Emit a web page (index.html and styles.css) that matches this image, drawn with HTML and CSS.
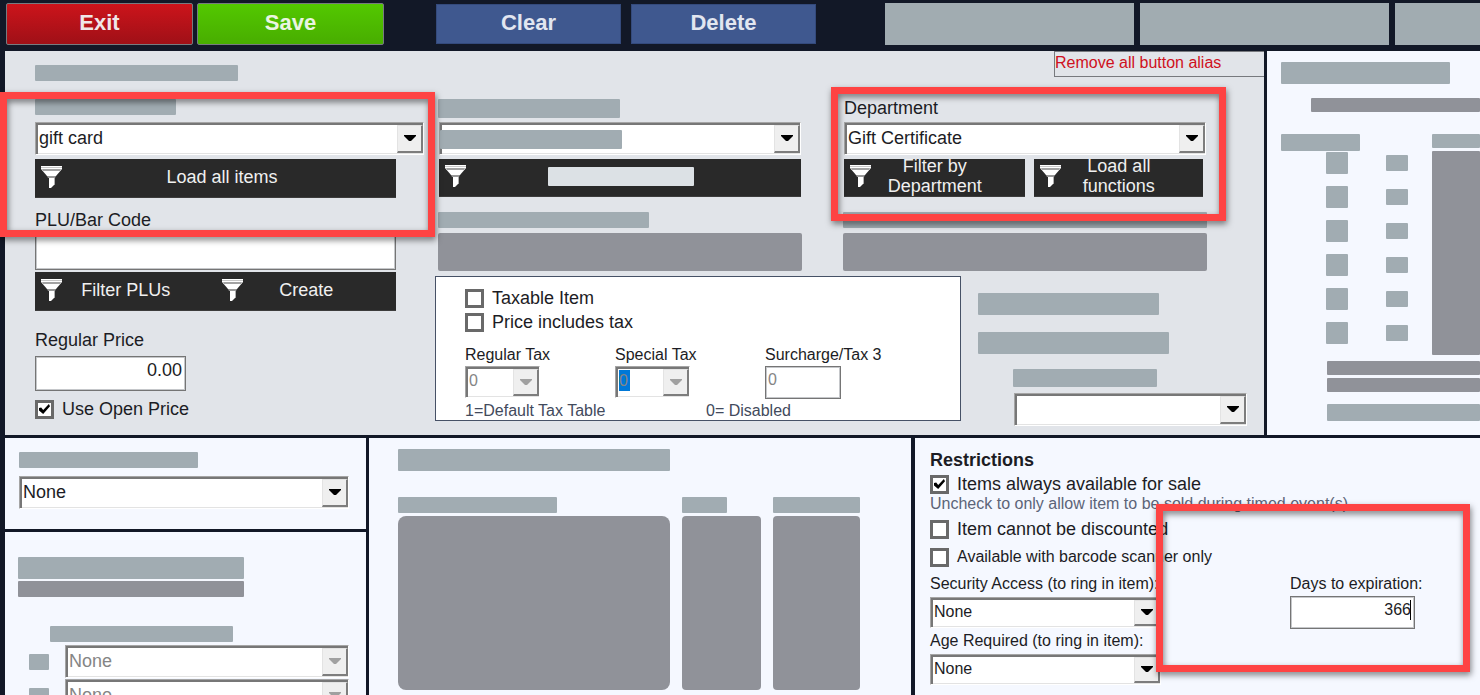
FILE: index.html
```html
<!DOCTYPE html>
<html lang="en">
<head>
<meta charset="utf-8">
<title>Item Setup</title>
<link rel="stylesheet" href="styles.css">
</head>
<body>
<svg class="defs" aria-hidden="true">
  <symbol id="funnel" viewBox="0 0 21 22">
    <path d="M0 0h21v3l-6 7H6L0 3z" fill="#fff"/>
    <path d="M0 1h21v1H0z" fill="#c8c8c8"/>
    <path d="M1 3h19l-1 2H2z" fill="#a3a3a3"/>
    <path d="M6 10h9l-1 2H7z" fill="#989898"/>
    <path d="M7 12h7v6l-4 4H8V12z" fill="#fff"/>
    <path d="M13 12h1v6l-1 1z" fill="#b0b0b0"/>
  </symbol>
  <symbol id="caret" viewBox="0 0 12 7"><path d="M0 0h12v1L7 6H5L0 1z"/></symbol>
</svg>

<header class="toolbar">
  <button class="tool exit">Exit</button>
  <button class="tool save">Save</button>
  <button class="tool blue first">Clear</button>
  <button class="tool blue">Delete</button>
  <div class="slots"><span class="slot"></span><span class="slot"></span><span class="slot last"></span></div>
</header>

<main class="workspace">
  <div class="row top">
    <section class="panel item">
      <div class="identity">
        <span class="bar w203"></span>
        <span class="bar w141"></span>
        <div class="combo"><select aria-label="Item name"><option>gift card</option></select><span class="arrow"><svg><use href="#caret"/></svg></span></div>
        <button class="dark load"><svg><use href="#funnel"/></svg><span>Load all items</span></button>
        <label class="label plu" for="plu">PLU/Bar Code</label>
        <input class="box wide" id="plu" type="text">
        <div class="pair"><button class="dark"><svg><use href="#funnel"/></svg><span>Filter PLUs</span></button><button class="dark"><svg><use href="#funnel"/></svg><span>Create</span></button></div>
        <label class="label price" for="price">Regular Price</label>
        <input class="box amount" id="price" type="text" value="0.00">
        <label class="check open"><input type="checkbox" checked>Use Open Price</label>
        <div class="mark mark-item"></div>
      </div>

      <div class="details">
        <button class="alias">Remove all button alias</button>
        <div class="lookups">
          <div class="lookup">
            <span class="bar h19 w182"></span>
            <div class="combo"><select aria-label="Lookup"><option></option></select><span class="bar h19 w182 cover"></span><span class="arrow"><svg><use href="#caret"/></svg></span></div>
            <button class="dark" aria-label="Filter"><svg><use href="#funnel"/></svg><span><i class="blank"></i></span></button>
            <span class="bar w211 sub"></span>
            <span class="bar deep field"></span>
          </div>
          <div class="lookup">
            <label class="label dept" for="dept">Department</label>
            <div class="combo"><select id="dept"><option>Gift Certificate</option></select><span class="arrow"><svg><use href="#caret"/></svg></span></div>
            <div class="pair split"><button class="dark"><svg><use href="#funnel"/></svg><span>Filter by Department</span></button><button class="dark"><svg><use href="#funnel"/></svg><span>Load all functions</span></button></div>
            <span class="bar sub"></span>
            <span class="bar deep field"></span>
            <div class="mark mark-dept"></div>
          </div>
        </div>
        <div class="lower">
          <div class="tax">
            <label class="check"><input type="checkbox">Taxable Item</label>
            <label class="check"><input type="checkbox">Price includes tax</label>
            <div class="rates">
              <div class="rate"><label for="t1">Regular Tax</label><div class="combo off"><select id="t1" disabled><option>0</option></select><span class="arrow"><svg><use href="#caret"/></svg></span></div></div>
              <div class="rate"><label for="t2">Special Tax</label><div class="combo off picked"><select id="t2" disabled><option>0</option></select><span class="arrow"><svg><use href="#caret"/></svg></span></div></div>
              <div class="rate"><label for="t3">Surcharge/Tax 3</label><input class="box" id="t3" type="text" value="0" disabled></div>
            </div>
            <div class="legend"><span>1=Default Tax Table</span><span>0= Disabled</span></div>
          </div>
          <div class="side">
            <span class="bar h22 w181"></span>
            <span class="bar h22 w191"></span>
            <div class="nested"><span class="bar h18 w144"></span>
            <div class="combo"><select aria-label="Option"><option></option></select><span class="arrow"><svg><use href="#caret"/></svg></span></div></div>
          </div>
        </div>
      </div>
    </section>

    <section class="panel extras">
      <span class="bar h22 w169"></span>
      <span class="bar deep h14 note"></span>
      <div class="matrix">
        <div class="choices">
          <span class="bar h17 w79"></span>
          <div class="choice"><i></i><b></b></div><div class="choice"><i></i><b></b></div><div class="choice"><i></i><b></b></div>
          <div class="choice"><i></i><b></b></div><div class="choice"><i></i><b></b></div><div class="choice"><i></i><b></b></div>
        </div>
        <div class="list"><span class="bar h14"></span><span class="bar deep fill"></span></div>
      </div>
      <div class="notes"><span class="bar deep h14"></span><span class="bar deep h14"></span><span class="bar h17"></span></div>
    </section>
  </div>

  <div class="row bottom">
    <div class="stack">
      <section class="panel group">
        <span class="bar w179"></span>
        <div class="combo"><select aria-label="Group"><option>None</option></select><span class="arrow"><svg><use href="#caret"/></svg></span></div>
      </section>
      <section class="panel modifiers">
        <span class="bar h22 w226"></span>
        <span class="bar deep w226"></span>
        <span class="bar w183 caption"></span>
        <div class="mod"><span class="bar w20"></span><div class="combo off"><select aria-label="Modifier 1" disabled><option>None</option></select><span class="arrow"><svg><use href="#caret"/></svg></span></div></div>
        <div class="mod"><span class="bar w20"></span><div class="combo off"><select aria-label="Modifier 2" disabled><option>None</option></select><span class="arrow"><svg><use href="#caret"/></svg></span></div></div>
      </section>
    </div>

    <section class="panel stock">
      <span class="bar h22 w272"></span>
      <div class="columns">
        <div><span class="bar w159"></span><span class="bar deep tall big"></span></div>
        <div><span class="bar w45"></span><span class="bar deep tall"></span></div>
        <div><span class="bar"></span><span class="bar deep tall"></span></div>
      </div>
    </section>

    <section class="panel limits">
      <h2>Restrictions</h2>
      <label class="check"><input type="checkbox" checked>Items always available for sale</label>
      <p>Uncheck to only allow item to be sold during timed event(s)</p>
      <label class="check discount"><input type="checkbox">Item cannot be discounted</label>
      <label class="check small"><input type="checkbox">Available with barcode scanner only</label>
      <div class="access">
        <div class="levels">
          <label for="sec">Security Access (to ring in item):</label>
          <div class="combo"><select id="sec"><option>None</option></select><span class="arrow"><svg><use href="#caret"/></svg></span></div>
          <label for="age">Age Required (to ring in item):</label>
          <div class="combo"><select id="age"><option>None</option></select><span class="arrow"><svg><use href="#caret"/></svg></span></div>
        </div>
        <div class="expiry">
          <label for="days">Days to expiration:</label>
          <input class="box" id="days" type="text" value="366">
        </div>
      </div>
      <div class="mark mark-days"></div>
    </section>
  </div>
</main>
</body>
</html>
```

FILE: styles.css
```css
* { box-sizing: border-box; }
body {
  margin: 0;
  height: 100vh;
  display: flex;
  flex-direction: column;
  overflow: hidden;
  background: #121827;
  color: #1c1c24;
  font: 18px/20px "Liberation Sans", Arial, sans-serif;
}
button, input, select { font: inherit; color: inherit; margin: 0; }
.defs { position: absolute; width: 0; height: 0; }

/* toolbar */
.toolbar { flex: none; height: 51px; padding: 3px 0 6px 6px; display: flex; align-items: center; overflow: hidden; }
.tool {
  flex: none; width: 187px; height: 42px; margin-right: 4px; padding: 0 0 3px;
  border: 1px solid #777b80; border-radius: 2px; color: #f0e6e8; font-weight: bold; font-size: 22px;
}
.exit { background: linear-gradient(#cc141b, #9f1017); }
.save { background: linear-gradient(#53c800, #48ad00); color: #eaf5e2; }
.blue { width: 185px; height: 40px; margin-right: 10px; background: #3f588f; border: 1px solid #344a7c; border-radius: 0; color: #e2e6f0; }
.first { margin-left: 48px; }
.slots { display: flex; gap: 6px; margin-left: 59px; flex: none; }
.slot { width: 249px; height: 42px; background: #a1acb1; }

/* panels */
.workspace { flex: 1; min-height: 0; display: flex; flex-direction: column; gap: 3px; padding-left: 5px; }
.row { display: flex; gap: 3px; }
.bottom { flex: 1; min-height: 0; }
.panel { background: #f5f8ff; }
.item { flex: 1; display: flex; background: #e1e4e9; }

/* placeholder bars */
.bar { display: block; height: 16px; border-radius: 1px; background: #a1acb2; }
.deep { background: #909299; }
.h14 { height: 14px; } .h17 { height: 17px; } .h18 { height: 18px; } .h19 { height: 19px; } .h22 { height: 22px; }
.w20 { width: 20px; } .w45 { width: 45px; } .w79 { width: 79px; } .w141 { width: 141px; } .w144 { width: 144px; }
.w159 { width: 159px; } .w169 { width: 169px; } .w179 { width: 179px; } .w181 { width: 181px; } .w182 { width: 182px; }
.w183 { width: 183px; } .w191 { width: 191px; } .w203 { width: 203px; } .w211 { width: 211px; } .w226 { width: 226px; } .w272 { width: 272px; }

/* controls */
.combo { position: relative; height: 33px; }
.combo select {
  appearance: none; display: block; width: 100%; height: 100%; padding: 0 28px 2px 2px; border-radius: 0;
  border: 1px solid #a5a5a5; border-right-color: #fff; border-bottom-color: #fff;
  box-shadow: inset 2px 2px #777, inset 0 -1px #e3e3e3; background: #fff; opacity: 1; padding-left: 3px;
}
.arrow {
  position: absolute; top: 3px; right: 1px; bottom: 2px; width: 26px; pointer-events: none;
  display: flex; align-items: center; justify-content: center;
  background: #efefef; border: 1px solid #e3e3e3; border-right: 2px solid #7d7d7d; border-bottom: 2px solid #7d7d7d;
}
.arrow svg { width: 12px; height: 7px; fill: #000; }
.off select { color: #858585; }
.off .arrow svg { fill: #a0a0a0; }
.picked select { background: linear-gradient(#0078d7, #0078d7) 3px 3px / 11px 21px no-repeat #fff; }
.cover { position: absolute; left: 1px; top: 8px; }
.box { display: block; border: 1px solid #757575; border-radius: 0; background: #fff; outline: 1px solid #c5c7ca; outline-offset: -2px; padding: 0 3px 6px; }
.dark {
  display: flex; align-items: center; width: 100%; height: 38px; padding: 0 26px 3px 6px;
  border: 1px solid #3c3c3c; border-width: 0 0 1px; background: #292929; color: #f0f0f0;
}
.dark svg { flex: none; width: 21px; height: 22px; }
.dark span { flex: 1; }
.blank { display: block; width: 146px; height: 19px; margin: 0 auto; background: #dce1e5; border-radius: 1px; }
.pair { display: flex; }
.check { display: flex; align-items: center; gap: 8px; height: 22px; white-space: nowrap; }
.check input { appearance: none; flex: none; width: 19px; height: 19px; border: 3px solid #696969; background: #fff; display: grid; place-items: center; }
.check input:checked::before { content: ""; width: 11px; height: 10px; background: #000; clip-path: polygon(0 40%, 20% 35%, 38% 60%, 90% 0, 100% 22%, 38% 100%, 0 65%); }
.label { display: block; height: 22px; line-height: 22px; }
.mark { position: absolute; z-index: 5; border: 7px solid #fe4343; pointer-events: none; filter: drop-shadow(1px 3px 3px rgba(0, 0, 0, .5)); }

/* item identity */
.identity { position: relative; flex: none; width: 430px; padding: 14px 11px 14px 30px; }
.identity .w141 { margin-top: 18px; }
.identity .combo { margin: 7px 0 4px; }
.identity .dark { height: 39px; }
.identity .load, .identity .wide, .identity .pair { width: 361px; }
.load { padding-right: 14px; }
.plu { margin-top: 11px; }
.wide { height: 37px; margin: 2px 0; }
.price { margin-top: 18px; }
.amount { width: 151px; height: 35px; margin: 5px 0 7px; text-align: right; }
.mark-item { left: -5px; right: 0; top: 41px; height: 145px; }

/* item details */
.details { flex: 1; min-width: 0; }
.alias { display: block; width: 210px; height: 26px; margin-left: auto; padding: 0 0 2px; background: none; border: 1px solid #77797e; border-right: 0; color: #cf1020; font-size: 16px; text-align: left; }
.lookups { display: grid; grid-template-columns: 1fr 1fr; gap: 41px; padding: 22px 57px 0 3px; }
.lookup { position: relative; min-width: 0; }
.lookup .combo { margin: 4px 1px; }
.lookup > .dark, .lookup > .pair { width: auto; margin: 0 1px; }
.lookup > .dark { width: calc(100% - 2px); }
.lookup > .dark .blank { margin-left: 82px; }
.dept { height: 19px; line-height: 18px; padding-left: 1px; }
.split { gap: 9px; padding-right: 3px; }
.split .dark { flex: 168 1 0; }
.split .dark:first-child { flex-grow: 182; }
.sub { margin-top: 15px; }
.field { height: 38px; margin-top: 5px; border-radius: 2px; }
.mark-dept { left: -12px; right: -19px; top: -12px; height: 134px; }
.lower { display: flex; gap: 17px; margin-top: 5px; }
.tax { flex: 1; height: 145px; padding: 10px 0 0 29px; border: 1px solid #465166; background: #fff; }
.tax .check + .check { margin-top: 2px; }
.rates { display: flex; margin-top: 12px; font-size: 16px; }
.rate { width: 150px; }
.rate label { display: block; margin-bottom: 1px; }
.rate .combo { width: 75px; height: 32px; }
.rate .box { width: 76px; height: 33px; color: #858585; padding-left: 2px; }
.legend { display: flex; margin-top: 3px; color: #424a5c; font-size: 16px; line-height: 18px; }
.legend span:first-child { width: 241px; }
.side { width: 286px; padding: 17px 17px 0 0; }
.side .w191 { margin-top: 17px; }
.nested { margin: 15px 0 0 35px; }
.nested .combo { margin: 6px 0 0 1px; }

/* extras */
.extras { flex: none; width: 213px; padding: 11px 0 14px 14px; }
.note { margin: 14px 0 22px 30px; }
.matrix { display: flex; justify-content: space-between; height: 221px; }
.choice { display: flex; gap: 38px; align-items: center; margin: 0 0 12px 45px; }
.choices .bar { margin-bottom: 1px; }
.choice i, .choice b { width: 22px; height: 22px; background: #a1acb2; border-radius: 1px; }
.choice b { height: 16px; }
.list { width: 48px; display: flex; flex-direction: column; gap: 3px; }
.fill { flex: 1; }
.notes { padding: 6px 0 0 46px; }
.notes .bar + .bar { margin-top: 3px; }
.notes .bar:last-child { margin-top: 12px; }

/* lower left */
.stack { flex: none; width: 361px; display: flex; flex-direction: column; gap: 3px; }
.group { flex: none; height: 91px; padding: 14px 17px 0 14px; }
.group .combo { margin-top: 8px; }
.modifiers { flex: 1; min-height: 0; padding: 25px 17px 0 13px; }
.modifiers .deep { margin-top: 2px; }
.caption { margin: 29px 0 3px 32px; }
.mod { display: flex; align-items: center; gap: 16px; margin: 0 0 1px 11px; }
.mod .combo { flex: 1; }

/* stock */
.stock { flex: none; width: 542px; padding: 11px 51px 0 29px; }
.columns { display: grid; grid-template-columns: 272fr 79fr 87fr; column-gap: 12px; margin-top: 26px; }
.tall { height: 174px; margin-top: 3px; border-radius: 4px; }
.big { border-radius: 8px; }

/* restrictions */
.limits { position: relative; flex: 1; margin-left: 1px; padding: 12px 0 0 15px; }
.limits h2 { margin: 0 0 3px; font-size: 18px; line-height: 20px; }
.limits p { margin: 0; color: #5c6478; font-size: 16px; line-height: 18px; }
.discount { margin-top: 5px; }
.limits .small { margin-top: 6px; }
.small, .access { font-size: 16px; }
.access { display: flex; gap: 129px; margin-top: 5px; }
.levels { width: 231px; white-space: nowrap; }
.access label { display: block; line-height: 22px; }
.levels .combo { height: 31px; margin: 2px 0; }
.levels .combo + label { margin-top: 2px; }
.expiry .box { width: 125px; height: 33px; margin-top: 1px; text-align: right; background: linear-gradient(#000, #000) 119px 3px / 1px 20px no-repeat #fff; }
.mark-days { left: 241px; right: 10px; top: 66px; height: 168px; }
```
